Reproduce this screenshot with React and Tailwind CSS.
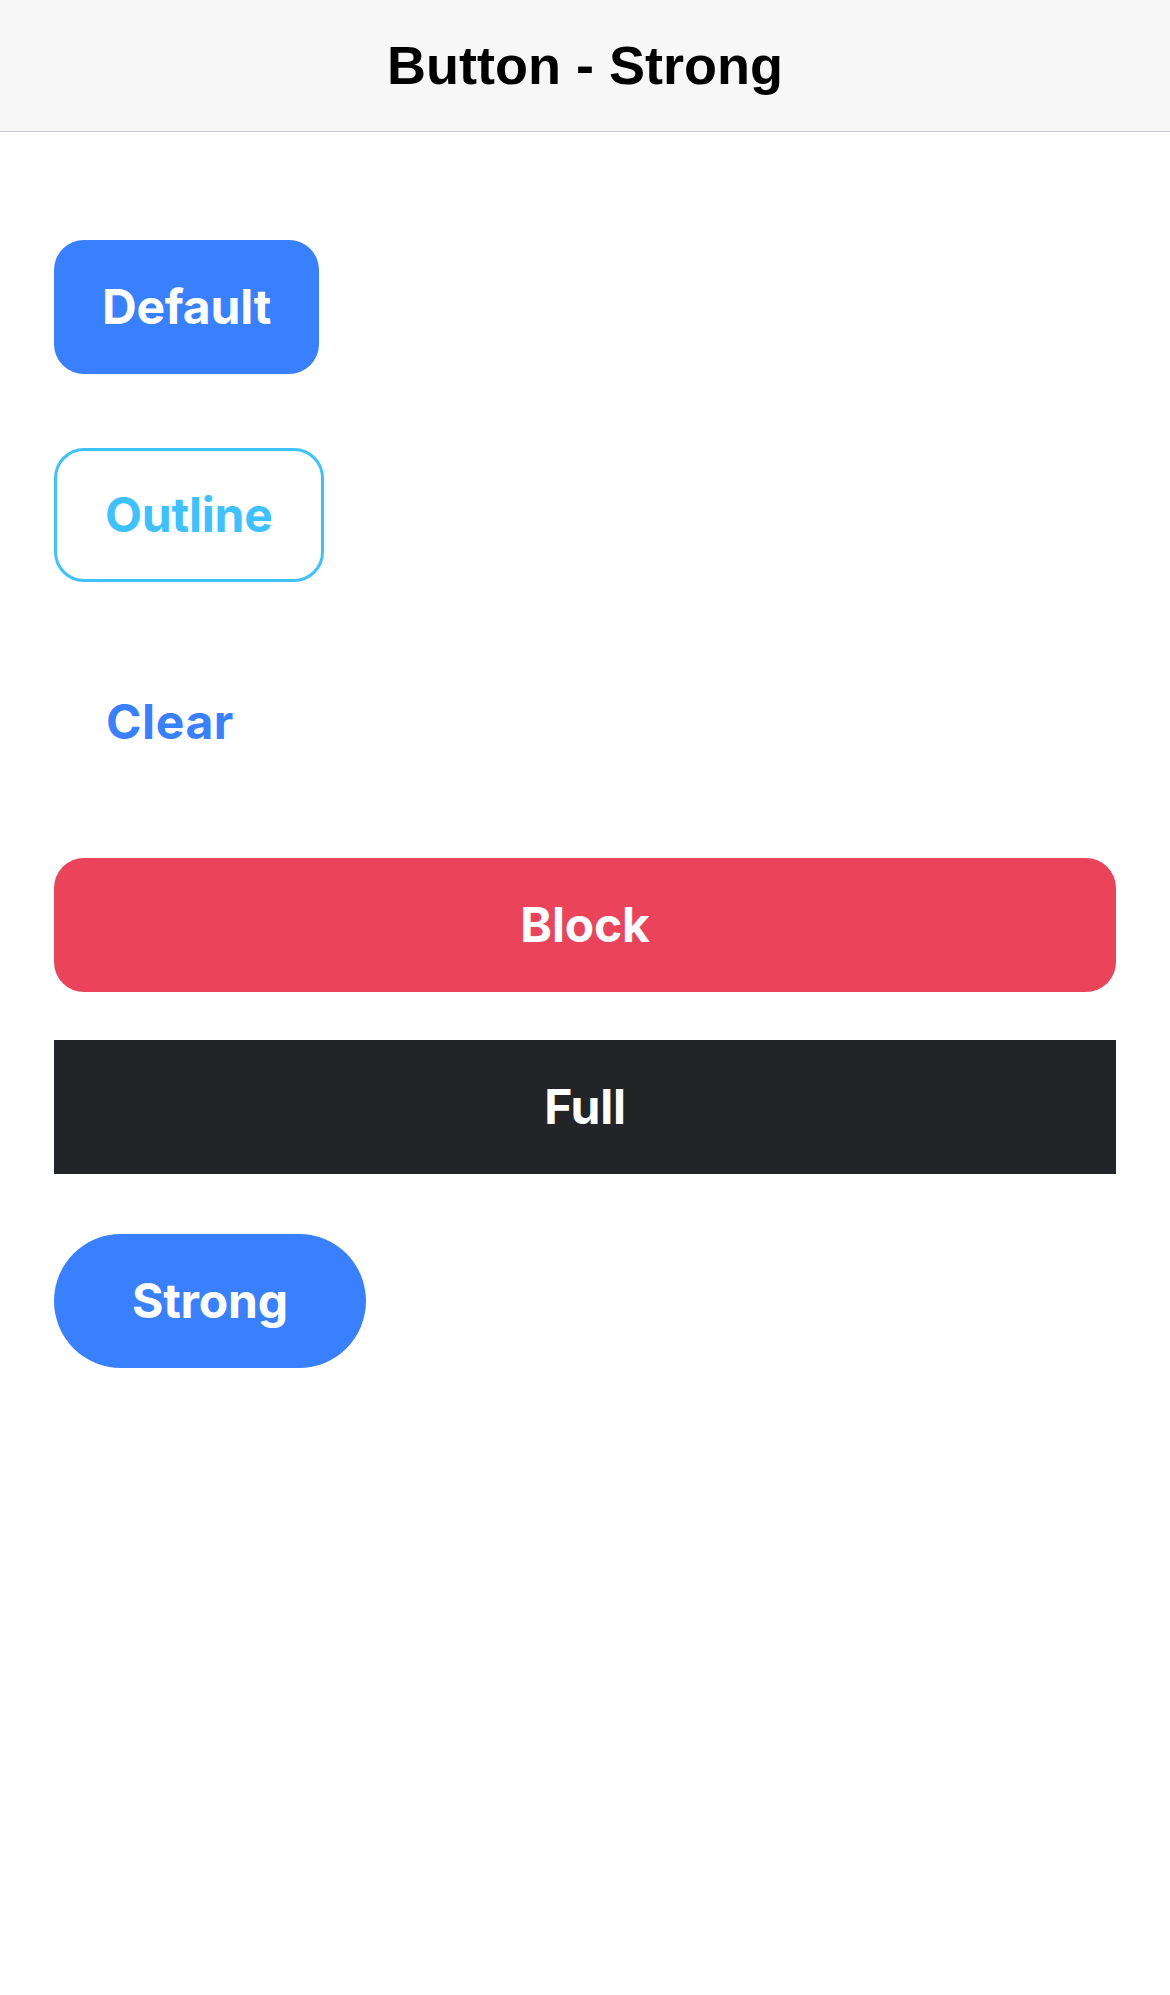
export default function App() {
  const btn = "flex items-center justify-center h-[134px] text-[48px] font-bold tracking-[-0.2px]";

  return (
    <div className="min-h-[1995px] bg-white font-['Inter','Liberation_Sans',sans-serif]">
      <header className="flex h-[132px] items-center justify-center border-b border-[#c8c7cc] bg-[#f7f7f7]">
        <h1 className="font-['Liberation_Sans',Arial,sans-serif] text-[54px] font-bold text-black">
          Button - Strong
        </h1>
      </header>

      <main className="flex flex-col items-start px-[54px]">
        <button className={`${btn} mt-[108px] rounded-[30px] bg-[#3880ff] px-[48px] text-white`}>
          Default
        </button>
        <button className={`${btn} mt-[74px] rounded-[30px] border-[3px] border-[#3dc2ff] bg-white px-[48px] text-[#3dc2ff]`}>
          Outline
        </button>
        <button className={`${btn} mt-[73px] rounded-[30px] px-[52px] text-[#3880ff] tracking-[0.6px]`}>
          Clear
        </button>
        <button className={`${btn} mt-[69px] w-full rounded-[30px] bg-[#eb445a] text-white`}>
          Block
        </button>
        <button className={`${btn} mt-[48px] w-full bg-[#222428] text-white`}>
          Full
        </button>
        <button className={`${btn} mt-[60px] rounded-full bg-[#3880ff] px-[78px] text-white`}>
          Strong
        </button>
      </main>
    </div>
  );
}
